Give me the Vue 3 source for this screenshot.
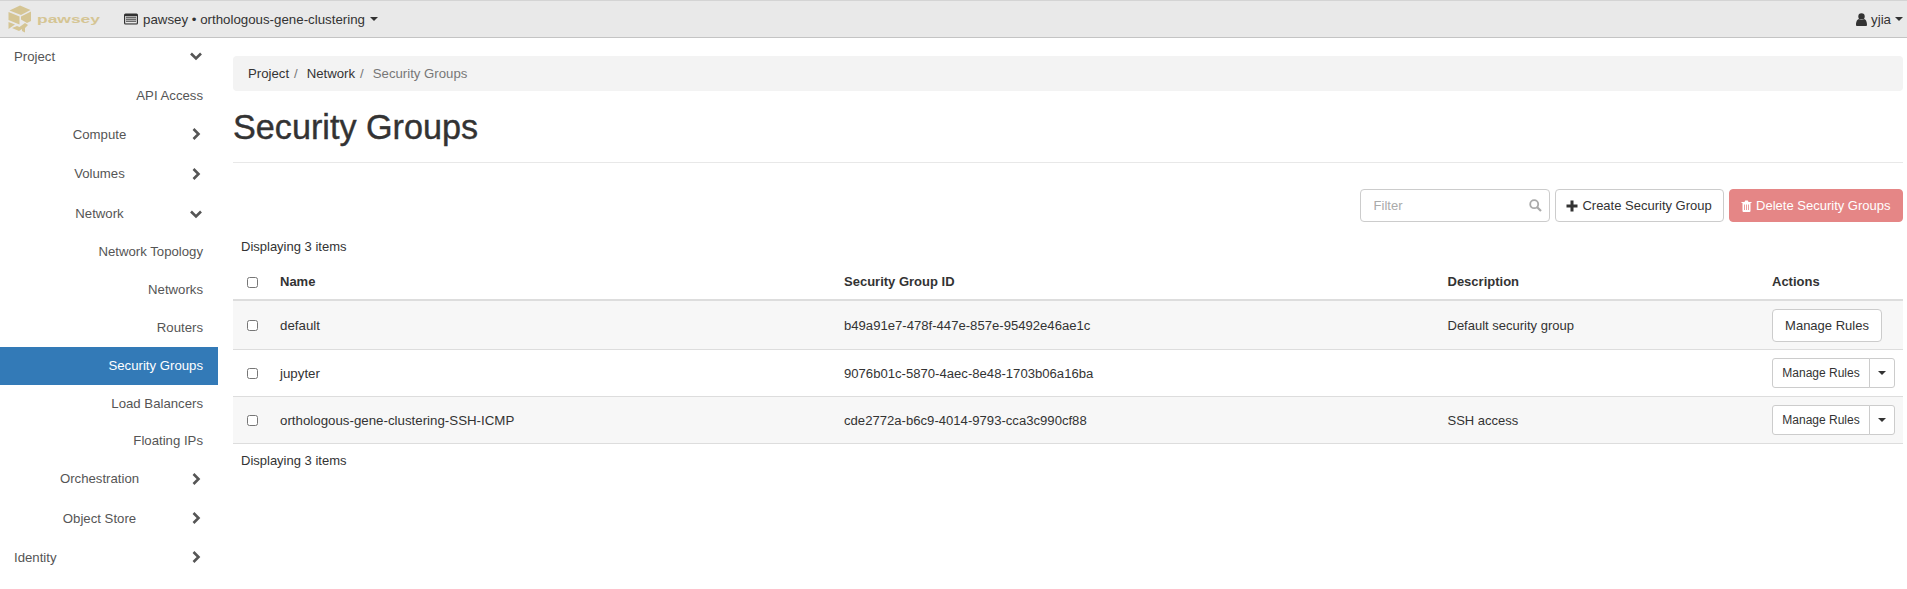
<template>
  <div class="page">
    <header class="navbar">
      <div class="brand">
        <svg class="brand-cube" width="24" height="28" viewBox="0 0 24 28">
          <path d="M12 0.5 L22.5 5 L13 10 L1.5 5.5 Z" fill="#d5c594" />
          <path d="M0.5 7 L11.5 11.5 L11.5 19.5 L0.5 15 Z" fill="#d5c594" />
          <path d="M0.5 17 L7 19.5 L0.5 24 Z" fill="#d5c594" />
          <path d="M13 11.5 L23 6.5 L23 16 L19 18 L13 14.5 Z" fill="#d5c594" />
          <path d="M9 21 L11.5 22 L17 18 L20 20 L17 23 L17 27.5 L14 26 L14 24 L11 26 L4 23 Z" fill="#d5c594" />
        </svg>
        <svg class="brand-word" width="64" height="14" viewBox="0 0 64 14">
          <text x="0" y="11" textLength="63" lengthAdjust="spacingAndGlyphs">pawsey</text>
        </svg>
      </div>
      <div class="project-picker">
        <svg width="14" height="12" viewBox="0 0 14 12">
          <rect x="0" y="0.5" width="14" height="11" rx="1.5" fill="#333" />
          <rect x="1.2" y="3" width="11.6" height="7.4" fill="#e8e8e8" />
          <path d="M2 4.2h10M2 6.2h10M2 8.2h10" stroke="#333" stroke-width="1" />
        </svg>
        <span>pawsey • orthologous-gene-clustering</span>
        <i class="caret"></i>
      </div>
      <div class="user">
        <svg width="11" height="13" viewBox="0 0 11 13">
          <circle cx="5.5" cy="3.4" r="3.2" fill="#333" />
          <path d="M0 12 C0 8 1.5 6.3 3 6 C4.5 7.3 6.5 7.3 8 6 C9.5 6.3 11 8 11 12 C11 13 10 13 9.5 13 L1.5 13 C1 13 0 13 0 12 Z" fill="#333" />
        </svg>
        <span>yjia</span>
        <i class="caret"></i>
      </div>
    </header>

    <div class="body">
      <nav class="sidebar">
        <a
          v-for="item in navItems"
          :key="item.label"
          class="nav-item"
          :class="[item.kind, { active: item.active }]"
        >
          <span class="nav-label">{{ item.label }}</span>
          <svg v-if="item.chevron" class="chevron" width="12" height="12" viewBox="0 0 12 12">
            <polyline
              :points="item.chevron === 'down' ? '1,3.5 6,8.5 11,3.5' : '3.5,1 8.5,6 3.5,11'"
              fill="none"
              stroke="#555"
              stroke-width="2.6"
            />
          </svg>
        </a>
      </nav>

      <main class="content">
        <ol class="breadcrumb">
          <li>Project</li>
          <li>Network</li>
          <li class="current">Security Groups</li>
        </ol>
        <h1>Security Groups</h1>

        <div class="actions">
          <div class="filter">
            <input type="text" placeholder="Filter" />
            <svg width="13" height="13" viewBox="0 0 13 13">
              <circle cx="5.2" cy="5.2" r="4" fill="none" stroke="#aaa" stroke-width="1.8" />
              <path d="M8.2 8.2 L12 12" stroke="#aaa" stroke-width="2.2" />
            </svg>
          </div>
          <button class="btn create">
            <svg width="12" height="12" viewBox="0 0 12 12">
              <path d="M4.5 0.5h3v4h4v3h-4v4h-3v-4h-4v-3h4z" fill="#333" />
            </svg>
            Create Security Group
          </button>
          <button class="btn danger">
            <svg width="11" height="12" viewBox="0 0 11 12">
              <path d="M0.5 2h10v1h-1v8a1 1 0 0 1-1 1h-6a1 1 0 0 1-1-1v-8h-1z M3.5 2l.7-1.5h2.6L7.5 2z" fill="#fff" />
              <path d="M3.5 4.5v5.5M5.5 4.5v5.5M7.5 4.5v5.5" stroke="#e58686" stroke-width="0.8" />
            </svg>
            Delete Security Groups
          </button>
        </div>

        <div class="count top">Displaying 3 items</div>
        <table>
          <colgroup>
            <col class="c-check" />
            <col class="c-name" />
            <col class="c-id" />
            <col class="c-desc" />
            <col />
          </colgroup>
          <thead>
            <tr>
              <th><input type="checkbox" /></th>
              <th>Name</th>
              <th>Security Group ID</th>
              <th>Description</th>
              <th>Actions</th>
            </tr>
          </thead>
          <tbody>
            <tr v-for="row in rows" :key="row.id">
              <td><input type="checkbox" /></td>
              <td class="name">{{ row.name }}</td>
              <td class="uuid">{{ row.id }}</td>
              <td>{{ row.description }}</td>
              <td>
                <button v-if="!row.split" class="btn manage">Manage Rules</button>
                <div v-else class="split">
                  <button class="btn small">Manage Rules</button>
                  <button class="btn small toggle"><i class="caret"></i></button>
                </div>
              </td>
            </tr>
          </tbody>
        </table>
        <div class="count bottom">Displaying 3 items</div>
      </main>
    </div>
  </div>
</template>

<script setup>
const navItems = [
  { label: 'Project', kind: 'top', chevron: 'down' },
  { label: 'API Access', kind: 'leaf' },
  { label: 'Compute', kind: 'group', chevron: 'right' },
  { label: 'Volumes', kind: 'group', chevron: 'right' },
  { label: 'Network', kind: 'group', chevron: 'down' },
  { label: 'Network Topology', kind: 'leaf' },
  { label: 'Networks', kind: 'leaf' },
  { label: 'Routers', kind: 'leaf' },
  { label: 'Security Groups', kind: 'leaf', active: true },
  { label: 'Load Balancers', kind: 'leaf' },
  { label: 'Floating IPs', kind: 'leaf' },
  { label: 'Orchestration', kind: 'group', chevron: 'right' },
  { label: 'Object Store', kind: 'group', chevron: 'right' },
  { label: 'Identity', kind: 'top', chevron: 'right' },
]

const rows = [
  { name: 'default', id: 'b49a91e7-478f-447e-857e-95492e46ae1c', description: 'Default security group', split: false },
  { name: 'jupyter', id: '9076b01c-5870-4aec-8e48-1703b06a16ba', description: '', split: true },
  { name: 'orthologous-gene-clustering-SSH-ICMP', id: 'cde2772a-b6c9-4014-9793-cca3c990cf88', description: 'SSH access', split: true },
]
</script>

<style>
html,
body {
  margin: 0;
  background: #fff;
  overflow: hidden;
}
</style>

<style scoped>
.page {
  width: 1907px;
  height: 589px;
  overflow: hidden;
  font-family: "Liberation Sans", Arial, sans-serif;
  font-size: 13px;
  color: #333;
}

.navbar {
  box-sizing: border-box;
  height: 38px;
  display: flex;
  align-items: center;
  background: #e9e9e9;
  border-top: 1px solid #d4d4d4;
  border-bottom: 1px solid #c4c4c4;
  padding: 0 4px 0 8px;
}

.brand {
  display: flex;
  align-items: center;
  gap: 5px;
  width: 116px;
}

.brand-word text {
  font-size: 11px;
  font-weight: 700;
  fill: #d5c594;
}

.project-picker {
  display: flex;
  align-items: center;
  gap: 5px;
  font-size: 13.3px;
}

.user {
  margin-left: auto;
  display: flex;
  align-items: center;
  gap: 4px;
  font-size: 13.3px;
}

.caret {
  display: inline-block;
  width: 0;
  height: 0;
  border-top: 4px solid #333;
  border-left: 4px solid transparent;
  border-right: 4px solid transparent;
}

.body {
  display: flex;
}

.sidebar {
  box-sizing: border-box;
  width: 218px;
  flex: none;
  color: #555;
  font-size: 13.2px;
}

.nav-item {
  box-sizing: border-box;
  display: flex;
  align-items: center;
  height: 39.2px;
  padding: 0 15px 0 14px;
}

.nav-item.leaf {
  justify-content: flex-end;
  height: 38px;
}

.nav-item.leaf:nth-child(2) {
  height: 38.6px;
}

.nav-item.group:nth-child(4) {
  height: 40px;
}

.nav-item.leaf:nth-child(6) {
  height: 37.6px;
}

.nav-item.leaf:nth-child(10) {
  height: 36.5px;
}

.nav-item.active {
  background: #337ab7;
  color: #fff;
}

.nav-item.group {
  padding-left: 0;
}

.nav-item.group .nav-label {
  flex: none;
  width: 199px;
  text-align: center;
}

.nav-item.top .nav-label {
  flex: 1;
}

.nav-item:first-child {
  height: 38.2px;
  padding-bottom: 2px;
}

.chevron {
  flex: none;
  margin-left: -9px;
  margin-right: -6px;
}

.nav-item.top .chevron {
  margin: 0 1px 0 0;
}

.content {
  box-sizing: border-box;
  flex: 1;
  min-width: 0;
  padding: 18px 4px 0 15px;
}

.breadcrumb {
  list-style: none;
  margin: 0;
  height: 35px;
  padding: 0 15px;
  display: flex;
  align-items: center;
  background: #f3f3f3;
  border-radius: 4px;
  font-size: 13.2px;
}

.breadcrumb li:not(.current)::after {
  content: "/";
  color: #777;
  padding: 0 9px 0 5px;
}

.breadcrumb .current {
  color: #777;
}

h1 {
  margin: 0;
  height: 71px;
  line-height: 72px;
  font-size: 34.2px;
  font-weight: 500;
  -webkit-text-stroke: 0.4px #333;
  color: #333;
  border-bottom: 1px solid #e8e8e8;
}

.actions {
  display: flex;
  justify-content: flex-end;
  gap: 5px;
  margin-top: 26px;
}

.filter {
  position: relative;
  width: 190px;
}

.filter input {
  box-sizing: border-box;
  width: 100%;
  height: 33px;
  padding: 0 30px 0 13px;
  border: 1px solid #ccc;
  border-radius: 4px;
  font: inherit;
  background: #fff;
  outline: none;
}

.filter input::placeholder {
  color: #aaa;
}

.filter svg {
  position: absolute;
  right: 8px;
  top: 10px;
}

.btn {
  box-sizing: border-box;
  height: 33px;
  padding: 0 12px;
  border: 1px solid #ccc;
  border-radius: 4px;
  background: #fff;
  color: #333;
  font: inherit;
  display: inline-flex;
  align-items: center;
  gap: 4px;
  white-space: nowrap;
}

.btn.create {
  width: 169px;
  padding: 0;
  justify-content: center;
}

.btn.danger {
  padding: 0 11.5px;
  background: #e58686;
  border-color: #e58686;
  color: #fff;
}

.count {
  padding-left: 8px;
}

.count.top {
  margin-top: 17px;
  height: 16px;
  line-height: 16px;
}

.count.bottom {
  margin-top: 9px;
  line-height: 16px;
}

table {
  width: 100%;
  margin-top: 7px;
  border-collapse: collapse;
  table-layout: fixed;
}

.c-check {
  width: 39px;
}

.c-name {
  width: 564px;
}

.c-id {
  width: 603.5px;
}

.c-desc {
  width: 324.5px;
}

th {
  box-sizing: border-box;
  height: 38px;
  padding: 2px 8px 0;
  text-align: left;
  font-weight: 700;
  border-bottom: 2px solid #ddd;
}

td {
  height: 46px;
  padding: 0 8px;
  border-bottom: 1px solid #ddd;
}

td.name {
  font-size: 13.3px;
}

td.uuid {
  font-size: 13.12px;
}

tbody tr:first-child td {
  height: 48px;
}

tbody tr:nth-child(odd) {
  background: #f7f7f7;
}

input[type="checkbox"] {
  appearance: none;
  box-sizing: border-box;
  display: block;
  width: 11px;
  height: 11px;
  margin: 1px 0 0 6px;
  border: 1px solid #767676;
  border-radius: 2.5px;
  background: #fff;
}

.btn.manage {
  width: 110px;
  justify-content: center;
  padding: 0;
}

.split {
  display: flex;
}

.btn.small {
  height: 30px;
  font-size: 12px;
  padding: 0;
  border-radius: 3px 0 0 3px;
  width: 98px;
  justify-content: center;
}

.btn.small.toggle {
  width: 26px;
  padding: 0;
  margin-left: -1px;
  border-radius: 0 3px 3px 0;
}
</style>
